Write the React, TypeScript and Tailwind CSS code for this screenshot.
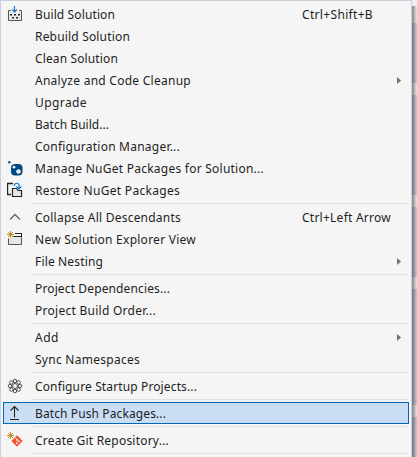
import { useLayoutEffect, useRef, useState, type ReactNode } from 'react';

type Item = { label: string; width: number; keys?: string; keysWidth?: number; sub?: boolean; icon?: ReactNode; active?: boolean };

// Tracks a label out so that it fills the given width.
function Fitted({ text, width }: { text: string; width: number }) {
  const ref = useRef<HTMLSpanElement>(null);
  const [spacing, setSpacing] = useState(0);
  useLayoutEffect(() => {
    const natural = ref.current!.getBoundingClientRect().width - spacing * text.length;
    const next = (width - natural) / text.length;
    if (Math.abs(next - spacing) > 0.01) setSpacing(next);
  }, [text, width, spacing]);
  return (
    <span ref={ref} className="block w-max whitespace-pre pt-[2px] leading-5 text-[#1e1e1e]" style={{ letterSpacing: `${spacing}px` }}>
      {text}
    </span>
  );
}

const Spark = () => (
  <path d="M3.500 0v7M0 3.500h7M1 1l5 5M6 1L1 6" stroke="#b98a1c" strokeWidth=".9" fill="none" />
);

const build = (
  <svg width="16" height="16" viewBox="0 0 16 16" fill="none">
    <path d="M1 5h14v10H1z" fill="#e9e9e9" />
    <path d="M4 4.500H1.500V14.500H14.500V4.500H12" stroke="#555" />
    <path d="M4 5h8v1H4z" fill="#f5f5f5" />
    <path d="M7.500 0v6M5 3.500L7.500 6 10 3.500" stroke="#1378c8" strokeWidth="1.200" />
    <path d="M3 8h2v1.500H3zM7 8h2v1.500H7zM11 8h2v1.500h-2zM5 11h2v1.500H5zM9 11h2v1.500H9z" fill="#222" />
  </svg>
);
const nuget = (
  <svg width="16" height="16" viewBox="0 0 16 16">
    <circle cx="2.300" cy="2.200" r="1.300" fill="#175487" />
    <rect x="4" y="4" width="11.500" height="11.500" rx="4" fill="#004880" />
    <circle cx="7" cy="7.200" r="1.400" fill="#e8f2fa" />
    <circle cx="11.500" cy="11.500" r="2.300" fill="#e8f2fa" />
  </svg>
);
const restore = (
  <svg width="16" height="16" viewBox="0 0 16 16" fill="none">
    <path d="M4 12.500H.5V1.500H6" stroke="#222" strokeWidth="1.400" />
    <path d="M5.500 6.500H9.500L11 8.500H14.500V14.500H5.500Z" fill="#e7e7e7" stroke="#222" strokeWidth="1.200" />
    <path d="M7.500 4V2.500Q9.500 0 12 2.500V6.500M9.500 4.500l2.500 2.500 2.500-2.500" stroke="#1378c8" strokeWidth="1.200" />
  </svg>
);
const chevron = (
  <svg width="16" height="16" viewBox="0 0 16 16" fill="none"><path d="M3 10.500L8 5.500l5 5" stroke="#666" strokeWidth="1.300" /></svg>
);
const view = (
  <svg width="16" height="16" viewBox="0 0 16 16" fill="none">
    <path d="M1.500 7.500V13.500H14.500V5.500H6" fill="#e6e6e6" stroke="#555" />
    <path d="M8 2.500h7M7 5.500h8M14.500 2v4" stroke="#222" />
    <path d="M0 0h6v7H0z" fill="#f5f5f5" />
    <Spark />
  </svg>
);
const gear = (
  <svg width="16" height="16" viewBox="0 0 16 16" fill="none" stroke="#3c3c3c" strokeWidth=".9">
    {[0, 45, 90, 135, 180, 225, 270, 315].map((a) => (
      <circle key={a} cx="8" cy="2.900" r="1.700" transform={`rotate(${a} 8 8)`} />
    ))}
    <circle cx="8" cy="8" r="2.500" />
  </svg>
);
const push = (
  <svg width="16" height="16" viewBox="0 0 16 16" fill="none" stroke="#222" strokeWidth="1.100">
    <path d="M7.500 12.500V1.500M3.500 5.500l4-4 4 4M3 14.500h9" />
  </svg>
);
const git = (
  <svg width="16" height="16" viewBox="0 0 16 16" fill="none">
    <rect x="6" y="5" width="8" height="8" rx=".7" transform="rotate(45 10 9)" fill="#f05133" />
    <path d="M7.500 5l2.500 2.500v4M10 7.500l2 1.700" stroke="#fff" strokeWidth=".7" />
    <circle cx="10" cy="11.500" r=".8" fill="#fff" />
    <circle cx="10" cy="7.500" r=".8" fill="#fff" />
    <circle cx="12.300" cy="9.500" r=".8" fill="#fff" />
    <Spark />
  </svg>
);

const groups: Item[][] = [
  [
    { label: 'Build Solution', width: 80, keys: 'Ctrl+Shift+B', keysWidth: 71, icon: build },
    { label: 'Rebuild Solution', width: 95 },
    { label: 'Clean Solution', width: 83 },
    { label: 'Analyze and Code Cleanup', width: 156, sub: true },
    { label: 'Upgrade', width: 52 },
    { label: 'Batch Build...', width: 74 },
    { label: 'Configuration Manager...', width: 145 },
    { label: 'Manage NuGet Packages for Solution...', width: 229, icon: nuget },
    { label: 'Restore NuGet Packages', width: 145, icon: restore },
  ],
  [
    { label: 'Collapse All Descendants', width: 146, keys: 'Ctrl+Left Arrow', keysWidth: 89, icon: chevron },
    { label: 'New Solution Explorer View', width: 161, icon: view },
    { label: 'File Nesting', width: 68, sub: true },
  ],
  [
    { label: 'Project Dependencies...', width: 135 },
    { label: 'Project Build Order...', width: 121 },
  ],
  [
    { label: 'Add', width: 24, sub: true },
    { label: 'Sync Namespaces', width: 105 },
  ],
  [{ label: 'Configure Startup Projects...', width: 162, icon: gear }],
  [{ label: 'Batch Push Packages...', width: 131, icon: push, active: true }],
  [{ label: 'Create Git Repository...', width: 134, icon: git }],
];

function Row({ item }: { item: Item }) {
  return (
    <div className={`flex h-[22px] items-center border pl-[3px] ${item.active ? 'border-[#0067b8] bg-[#c9def5]' : 'border-transparent'}`}>
      <div className="mr-[12px] h-4 w-4 shrink-0">{item.icon}</div>
      <Fitted text={item.label} width={item.width} />
      {item.keys && <div className="ml-auto w-[106px]"><Fitted text={item.keys} width={item.keysWidth ?? 0} /></div>}
      {item.sub && (
        <svg width="4" height="7" className="mr-[7px] ml-auto"><path d="M0 0L4 3.500L0 7z" fill="#717171" /></svg>
      )}
    </div>
  );
}

export default function App() {
  return (
    <div className="flex h-[457px] w-[417px] overflow-hidden bg-[#f5f5f5] font-['Noto_Sans','Open_Sans',sans-serif] text-[12px]">
      <div className="flex w-[412px] shrink-0 flex-col border-t border-r border-l border-[#cccedb] pt-[2px] pr-[2px] pl-[2px]">
        {groups.map((group, i) => (
          <div key={i} className="shrink-0">
            {group.map((item) => <Row key={item.label} item={item} />)}
            <div className="mr-[1px] ml-[28px] h-[5px] pt-[2px]"><div className="h-px w-full bg-[#dfe1e5]" /></div>
          </div>
        ))}
      </div>
      <div className="relative flex w-[5px] flex-col bg-[#cccedb]">
        <div className="h-[23px] bg-[#eeeef2]" />
        <div className="mt-[60px] h-3 bg-[#eeeef2]" />
        <div className="mt-[100px] h-3 bg-[#eeeef2]" />
        <div className="mt-[70px] h-3 bg-[#eeeef2]" />
        <div className="mt-[116px] h-3 bg-[#eeeef2]" />
        <div className="absolute inset-x-0 top-[6px] bottom-0 bg-linear-to-r from-black/45 to-black/3" />
      </div>
    </div>
  );
}
